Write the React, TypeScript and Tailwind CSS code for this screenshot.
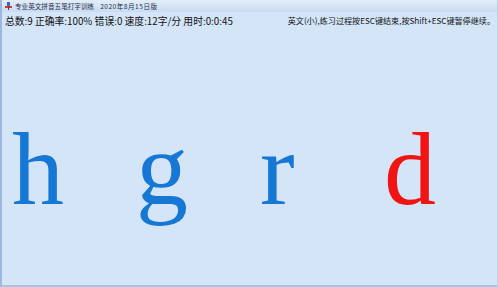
import React from "react";

const serif = '"Liberation Serif", "Times New Roman", serif';
const cjk = '"Noto Sans CJK SC", sans-serif';

export default function App() {
  const letters = [
    { c: "h", color: "#1677d4" },
    { c: "g", color: "#1677d4" },
    { c: "r", color: "#1677d4" },
    { c: "d", color: "#f01414" },
  ];
  return (
    <div className="w-[498px] h-[287px] overflow-hidden bg-[#d5e5f8] border-l-2 border-r border-b-2 border-l-[#9cb8e0] border-r-[#b9cfee] border-b-[#a9c2e6] flex flex-col">
      <div className="h-[12px] flex items-center gap-[3px] pl-[3px] bg-gradient-to-b from-[#e3edf9] to-[#c9dbf1] leading-none text-[#1d2c44]" style={{ fontFamily: cjk }}>
        <svg width="7" height="8" viewBox="0 0 7 8">
          <rect x="2" y="0" width="3" height="5" fill="#3a66c4" />
          <rect x="0" y="4" width="7" height="2" fill="#d33" />
          <rect x="3" y="5" width="1" height="3" fill="#445" />
        </svg>
        <span className="text-[6.6px]">专业英文拼音五笔打字训练</span>
        <span className="ml-[3px] text-[6.6px] tracking-[0.5px]">2020年8月15日版</span>
      </div>
      <div className="flex justify-between items-center h-[19px] pl-[3px] pr-[2px] text-[#111]" style={{ fontFamily: cjk }}>
        <span className="text-[9.8px] leading-none whitespace-nowrap">总数:9 正确率:100% 错误:0 速度:12字/分 用时:0:0:45</span>
        <span className="text-[8.1px] leading-none whitespace-nowrap">英文(小),练习过程按ESC键结束,按Shift+ESC键暂停继续。</span>
      </div>
      <div className="flex pl-[10px] mt-[86px] h-[104px]">
        {letters.map((l, i) => (
          <div key={i} className="w-[124px] shrink-0 text-[104px] leading-[104px]" style={{ fontFamily: serif, color: l.color }}>{l.c}</div>
        ))}
      </div>
    </div>
  );
}
